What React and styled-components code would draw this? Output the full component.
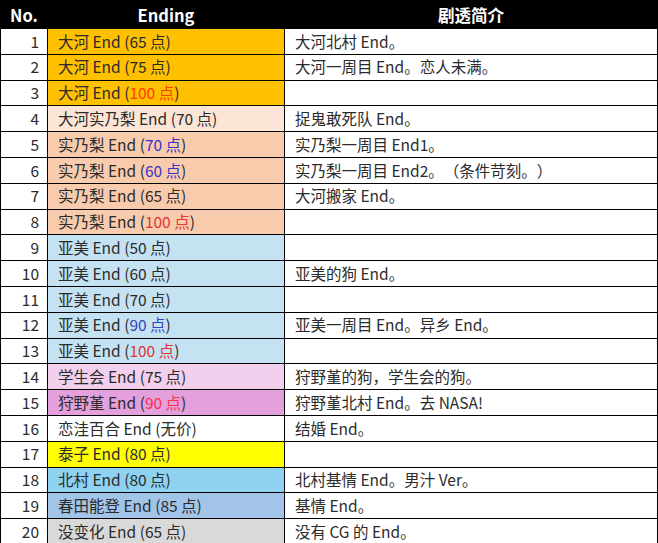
import React from 'react';
import styled, { createGlobalStyle } from 'styled-components';

const GlobalStyle = createGlobalStyle`
  html, body {
    margin: 0;
    padding: 0;
    background: #ffffff;
  }
  body {
    font-family: "Noto Sans CJK SC", "Noto Sans", sans-serif;
    text-spacing-trim: space-all;
  }
`;

const Table = styled.table`
  width: 658px;
  height: 543px;
  border-collapse: collapse;
  table-layout: fixed;
  font-size: 15.5px;
  color: #2b2b2b;
`;

const HeadCell = styled.th`
  background: #000000;
  color: #ffffff;
  font-weight: 700;
  font-size: 16.5px;
  height: 27px;
  padding: 0;
  text-align: center;
  border: 1px solid #000000;
`;

const Row = styled.tr`
  height: 25.8px;
`;

const NoCell = styled.td`
  text-align: right;
  padding: 0 8px 0 0;
  border: 1px solid #000000;
  background: #ffffff;
  line-height: 1;
`;

const EndingCell = styled.td`
  padding: 0 0 0 10px;
  border: 1px solid #000000;
  background: ${({ $bg }) => $bg};
  white-space: nowrap;
  line-height: 1;
`;

const DescCell = styled.td`
  padding: 0 0 0 10px;
  border: 1px solid #000000;
  background: #ffffff;
  white-space: nowrap;
  line-height: 1;
`;

const Score = styled.span`
  color: ${({ $color }) => $color};
`;

const ORANGE = '#FFC000';
const PEACH = '#FCE4D6';
const SALMON = '#F8CBAD';
const SKY = '#C5E2F3';

const rows = [
  { name: '大河', score: '65 点', bg: ORANGE, desc: '大河北村 End。' },
  { name: '大河', score: '75 点', bg: ORANGE, desc: '大河一周目 End。恋人未满。' },
  { name: '大河', score: '100 点', bg: ORANGE, color: '#FF3D00', desc: '' },
  { name: '大河实乃梨', score: '70 点', bg: PEACH, desc: '捉鬼敢死队 End。' },
  { name: '实乃梨', score: '70 点', bg: SALMON, color: '#3434C8', desc: '实乃梨一周目 End1。' },
  { name: '实乃梨', score: '60 点', bg: SALMON, color: '#3434C8', desc: '实乃梨一周目 End2。（条件苛刻。）' },
  { name: '实乃梨', score: '65 点', bg: SALMON, desc: '大河搬家 End。' },
  { name: '实乃梨', score: '100 点', bg: SALMON, color: '#E03434', desc: '' },
  { name: '亚美', score: '50 点', bg: SKY, desc: '' },
  { name: '亚美', score: '60 点', bg: SKY, desc: '亚美的狗 End。' },
  { name: '亚美', score: '70 点', bg: SKY, desc: '' },
  { name: '亚美', score: '90 点', bg: SKY, color: '#2F45B8', desc: '亚美一周目 End。异乡 End。' },
  { name: '亚美', score: '100 点', bg: SKY, color: '#E03434', desc: '' },
  { name: '学生会', score: '75 点', bg: '#F2CFEC', desc: '狩野堇的狗，学生会的狗。' },
  { name: '狩野堇', score: '90 点', bg: '#E3A0DC', color: '#FF2E4A', desc: '狩野堇北村 End。去 NASA!' },
  { name: '恋洼百合', score: '无价', bg: '#FFFFFF', desc: '结婚 End。' },
  { name: '泰子', score: '80 点', bg: '#FFFF00', desc: '' },
  { name: '北村', score: '80 点', bg: '#8ED1F1', desc: '北村基情 End。男汁 Ver。' },
  { name: '春田能登', score: '85 点', bg: '#A2C4E8', desc: '基情 End。' },
  { name: '没变化', score: '65 点', bg: '#D9D9D9', desc: '没有 CG 的 End。' },
];

const App = () => (
  <>
    <GlobalStyle />
    <Table>
      <colgroup>
        <col style={{ width: 47 }} />
        <col style={{ width: 237 }} />
        <col />
      </colgroup>
      <thead>
        <tr>
          <HeadCell>No.</HeadCell>
          <HeadCell>Ending</HeadCell>
          <HeadCell>剧透简介</HeadCell>
        </tr>
      </thead>
      <tbody>
        {rows.map((row, i) => (
          <Row key={i}>
            <NoCell>{i + 1}</NoCell>
            <EndingCell $bg={row.bg}>
              {row.name} End (
              {row.color ? <Score $color={row.color}>{row.score}</Score> : row.score}
              )
            </EndingCell>
            <DescCell>{row.desc}</DescCell>
          </Row>
        ))}
      </tbody>
    </Table>
  </>
);

export default App;
